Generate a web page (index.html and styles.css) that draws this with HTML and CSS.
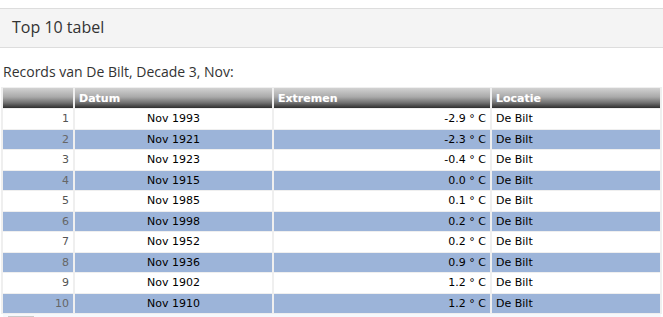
FILE: index.html
```html
<!DOCTYPE html>
<html>
<head>
<meta charset="utf-8">
<link rel="stylesheet" href="styles.css">
</head>
<body>
<div class="panel-head">Top 10 tabel</div>
<div class="content">
  <p class="intro">Records van De Bilt, Decade 3, Nov:</p>
  <div class="table-wrap">
  <table class="records">
    <thead>
      <tr><th class="c-rank"></th><th class="c-date">Datum</th><th class="c-val">Extremen</th><th class="c-loc">Locatie</th></tr>
    </thead>
    <tbody>
      <tr><td class="rank">1</td><td class="date">Nov 1993</td><td class="val">-2.9 ° C</td><td class="loc">De Bilt</td></tr>
      <tr class="alt"><td class="rank">2</td><td class="date">Nov 1921</td><td class="val">-2.3 ° C</td><td class="loc">De Bilt</td></tr>
      <tr><td class="rank">3</td><td class="date">Nov 1923</td><td class="val">-0.4 ° C</td><td class="loc">De Bilt</td></tr>
      <tr class="alt"><td class="rank">4</td><td class="date">Nov 1915</td><td class="val">0.0 ° C</td><td class="loc">De Bilt</td></tr>
      <tr><td class="rank">5</td><td class="date">Nov 1985</td><td class="val">0.1 ° C</td><td class="loc">De Bilt</td></tr>
      <tr class="alt"><td class="rank">6</td><td class="date">Nov 1998</td><td class="val">0.2 ° C</td><td class="loc">De Bilt</td></tr>
      <tr><td class="rank">7</td><td class="date">Nov 1952</td><td class="val">0.2 ° C</td><td class="loc">De Bilt</td></tr>
      <tr class="alt"><td class="rank">8</td><td class="date">Nov 1936</td><td class="val">0.9 ° C</td><td class="loc">De Bilt</td></tr>
      <tr><td class="rank">9</td><td class="date">Nov 1902</td><td class="val">1.2 ° C</td><td class="loc">De Bilt</td></tr>
      <tr class="alt"><td class="rank">10</td><td class="date">Nov 1910</td><td class="val">1.2 ° C</td><td class="loc">De Bilt</td></tr>
    </tbody>
  </table>
  <div class="scroll"><span class="thumb"></span></div>
  </div>
</div>
</body>
</html>
```

FILE: styles.css
```css
html, body {
  margin: 0;
  padding: 0;
  background: #fff;
}
body {
  padding-top: 8px;
  font-family: "Open Sans", "DejaVu Sans", sans-serif;
  color: #333;
}
.panel-head {
  background: #f4f4f4;
  border-top: 1px solid #dddddd;
  border-bottom: 1px solid #dddddd;
  height: 38px;
  line-height: 37px;
  padding-left: 12px;
  font-size: 16px;
  color: #333;
}
.content {
  padding-left: 3px;
}
.intro {
  margin: 0;
  padding-top: 14px;
  height: 25px;
  line-height: 20px;
  font-size: 14px;
  color: #333;
}
.table-wrap {
  width: 658px;
  background: #f6f8fc;
}
.records {
  border-collapse: separate;
  border-spacing: 2px 1px;
  margin: 0 -2px;
  width: 661px;
  font-family: "DejaVu Sans", Verdana, sans-serif;
  font-size: 11px;
  background: #efefef;
}
.records th {
  height: 20px;
  padding: 0 4px;
  text-align: left;
  color: #fff;
  font-weight: bold;
  background: linear-gradient(to bottom, #d2d2d2 0%, #a9a9a9 45%, #6e6e6e 75%, #2e2e2e 100%);
  text-shadow: 0 0 1px rgba(255,255,255,0.3);
}
.records .c-rank { width: 62px; }
.records .c-date { width: 189px; }
.records .c-val { width: 208px; }
.records td {
  height: 19.5px;
  padding: 0 4px;
  background: #fff;
  color: #000;
  white-space: nowrap;
}
.records tr.alt td {
  background: #9cb4d9;
}
.records .rank {
  text-align: right;
  color: #555;
}
.records tr.alt .rank {
  color: #666;
}
.records .date { text-align: center; }
.records .val { text-align: right; }
.records .loc { text-align: left; }
.scroll {
  height: 6px;
  padding-top: 2px;
  padding-left: 5px;
}
.thumb {
  display: block;
  width: 26px;
  height: 3px;
  background: #c9c9c9;
}
```
